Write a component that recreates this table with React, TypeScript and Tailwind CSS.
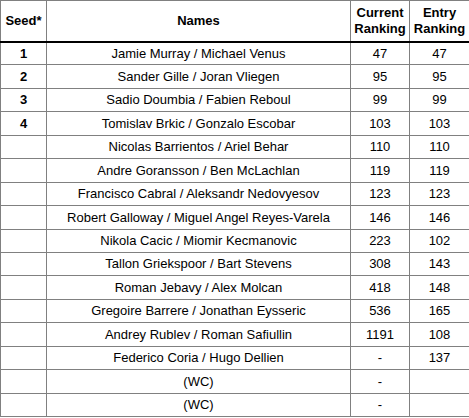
import React from 'react';

type Entry = { seed?: number; names: string; current: string; entry: string };

const ENTRIES: Entry[] = [
  { seed: 1, names: 'Jamie Murray / Michael Venus', current: '47', entry: '47' },
  { seed: 2, names: 'Sander Gille / Joran Vliegen', current: '95', entry: '95' },
  { seed: 3, names: 'Sadio Doumbia / Fabien Reboul', current: '99', entry: '99' },
  { seed: 4, names: 'Tomislav Brkic / Gonzalo Escobar', current: '103', entry: '103' },
  { names: 'Nicolas Barrientos / Ariel Behar', current: '110', entry: '110' },
  { names: 'Andre Goransson / Ben McLachlan', current: '119', entry: '119' },
  { names: 'Francisco Cabral / Aleksandr Nedovyesov', current: '123', entry: '123' },
  { names: 'Robert Galloway / Miguel Angel Reyes-Varela', current: '146', entry: '146' },
  { names: 'Nikola Cacic / Miomir Kecmanovic', current: '223', entry: '102' },
  { names: 'Tallon Griekspoor / Bart Stevens', current: '308', entry: '143' },
  { names: 'Roman Jebavy / Alex Molcan', current: '418', entry: '148' },
  { names: 'Gregoire Barrere / Jonathan Eysseric', current: '536', entry: '165' },
  { names: 'Andrey Rublev / Roman Safiullin', current: '1191', entry: '108' },
  { names: 'Federico Coria / Hugo Dellien', current: '-', entry: '137' },
  { names: '(WC)', current: '-', entry: '' },
  { names: '(WC)', current: '-', entry: '' },
];

const cell = 'border border-[#808080] text-center p-0';

export default function App() {
  return (
    <div className="w-[469px] h-[418px] bg-white font-['Liberation_Sans',Arial,sans-serif] text-[13px] text-black">
      <table className="w-[469px] table-fixed border-collapse">
        <colgroup>
          <col className="w-[46px]" />
          <col className="w-[304px]" />
          <col className="w-[59px]" />
          <col className="w-[60px]" />
        </colgroup>
        <thead>
          <tr className="h-[41px] font-bold leading-[16px]">
            <th className={`${cell} border-b-2 border-b-black`}>Seed*</th>
            <th className={`${cell} border-b-2 border-b-black`}>Names</th>
            <th className={`${cell} border-b-2 border-b-black`}>
              Current
              <br />
              Ranking
            </th>
            <th className={`${cell} border-b-2 border-b-black`}>
              Entry
              <br />
              Ranking
            </th>
          </tr>
        </thead>
        <tbody>
          {ENTRIES.map((e, i) => (
            <tr key={i} className="h-[23.44px]">
              <td className={`${cell} font-bold`}>{e.seed ?? ''}</td>
              <td className={cell}>{e.names}</td>
              <td className={cell}>{e.current}</td>
              <td className={cell}>{e.entry}</td>
            </tr>
          ))}
        </tbody>
      </table>
    </div>
  );
}
